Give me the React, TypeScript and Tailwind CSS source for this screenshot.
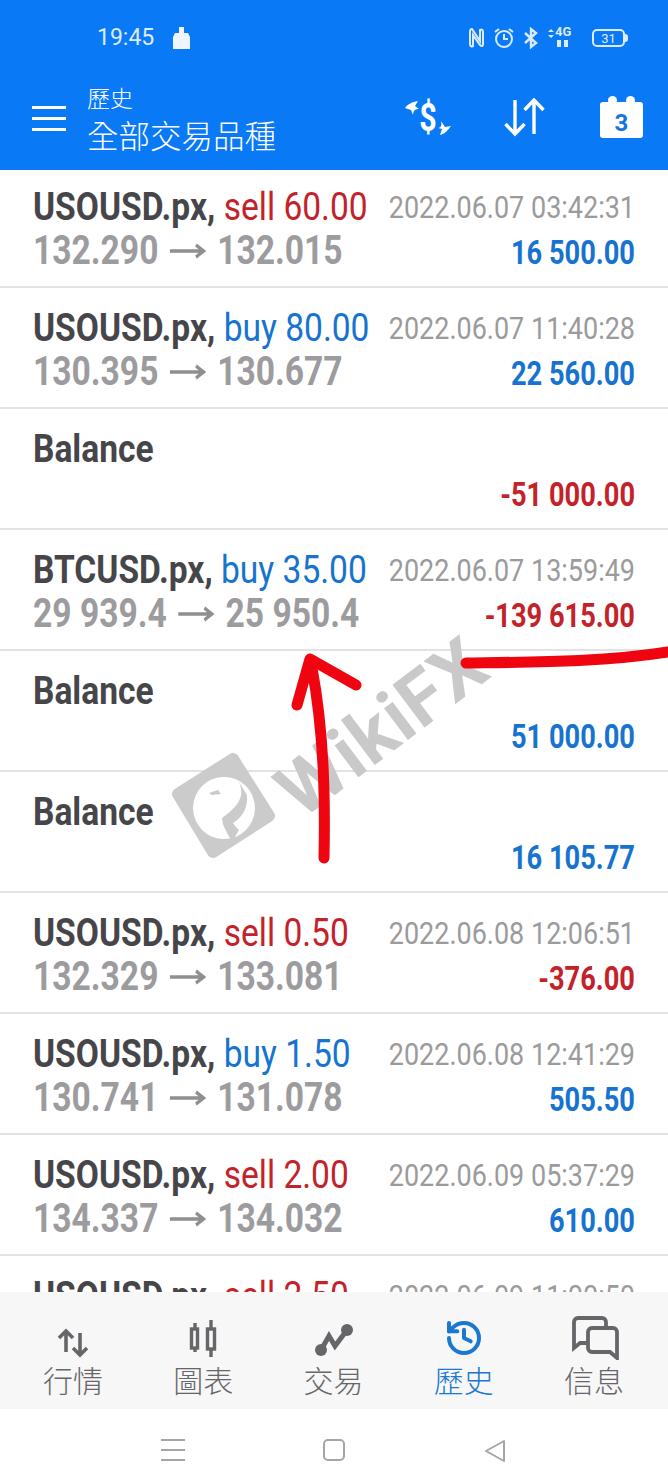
import React from "react";
import { History } from "lucide-react";

type Trade = {
  symbol: string;
  side?: "buy" | "sell";
  lots?: string;
  time?: string;
  prices?: [string, string];
  profit: string;
};

const TRADES: Trade[] = [
  { symbol: "USOUSD.px,", side: "sell", lots: "60.00", time: "2022.06.07 03:42:31", prices: ["132.290", "132.015"], profit: "16 500.00" },
  { symbol: "USOUSD.px,", side: "buy", lots: "80.00", time: "2022.06.07 11:40:28", prices: ["130.395", "130.677"], profit: "22 560.00" },
  { symbol: "Balance", profit: "-51 000.00" },
  { symbol: "BTCUSD.px,", side: "buy", lots: "35.00", time: "2022.06.07 13:59:49", prices: ["29 939.4", "25 950.4"], profit: "-139 615.00" },
  { symbol: "Balance", profit: "51 000.00" },
  { symbol: "Balance", profit: "16 105.77" },
  { symbol: "USOUSD.px,", side: "sell", lots: "0.50", time: "2022.06.08 12:06:51", prices: ["132.329", "133.081"], profit: "-376.00" },
  { symbol: "USOUSD.px,", side: "buy", lots: "1.50", time: "2022.06.08 12:41:29", prices: ["130.741", "131.078"], profit: "505.50" },
  { symbol: "USOUSD.px,", side: "sell", lots: "2.00", time: "2022.06.09 05:37:29", prices: ["134.337", "134.032"], profit: "610.00" },
  { symbol: "USOUSD.px,", side: "sell", lots: "2.50", time: "2022.06.09 11:00:50", prices: ["134.105", "133.880"], profit: "562.50" },
];

const cjk = "font-['Noto_Sans_CJK_TC','Noto_Sans',sans-serif]";

function TradeRow({ trade }: { trade: Trade }) {
  const loss = trade.profit.startsWith("-");
  return (
    <div className="h-[121px] shrink-0 border-b-2 border-[#e3e3e3] px-[33px] pt-[16px] first:h-[118px] first:pt-[13px]">
      {/* both sides are zero-width flex items so the squeezed text keeps its own anchor */}
      <div className="flex h-[48px] items-center">
        <div className="w-0 grow origin-left scale-x-[0.883] whitespace-nowrap text-[38px] leading-[48px]">
          <span className="font-bold text-[#46464a]">{trade.symbol}</span>
          {trade.side && (
            <span className={trade.side === "sell" ? "text-[#c4222a]" : "text-[#1673cf]"}>
              {" "}
              {trade.side} {trade.lots}
            </span>
          )}
        </div>
        {trade.time && (
          <div className="flex w-0 grow origin-right scale-x-[0.843] justify-end whitespace-nowrap text-[32px] leading-[48px] text-[#9b9b9b]">
            {trade.time}
          </div>
        )}
      </div>
      <div className="flex h-[40px] items-center">
        <div className="flex w-0 grow origin-left scale-x-[0.84] items-center whitespace-nowrap text-[40px] font-bold leading-[40px] text-[#9c9c9e]">
          {trade.prices && (
            <>
              {trade.prices[0]}
              <svg width="44" height="16" viewBox="0 0 44 16" className="mx-[13px] shrink-0">
                <path d="M1 8h40M32 2l9 6-9 6" fill="none" stroke="#8f8f92" strokeWidth="3.5" />
              </svg>
              {trade.prices[1]}
            </>
          )}
        </div>
        <div className={`flex w-0 grow origin-right scale-x-[0.825] justify-end whitespace-nowrap pt-[3px] text-[33px] font-bold leading-[40px] ${loss ? "text-[#c4222a]" : "text-[#1673cf]"}`}>
          {trade.profit}
        </div>
      </div>
    </div>
  );
}

function StatusBar() {
  return (
    <div className="flex h-[75px] items-center justify-between pl-[97px] pr-[40px] pt-[1px] text-[#dcebff]">
      <div className="flex items-center gap-[18px]">
        <span className="text-[23px] font-['Roboto',sans-serif]">19:45</span>
        <svg width="19" height="22" viewBox="0 0 19 22" fill="#eef5ff">
          <path d="M7 0h5v6h4l2 4v12H1V10l2-4h4z" />
        </svg>
      </div>
      <div className="flex items-center gap-[8px]">
        <svg width="17" height="22" viewBox="0 0 17 22" fill="none" stroke="currentColor" strokeWidth="2">
          <path d="M4 2c-2 0-2 1-2 3v12c0 2 1 3 3 2V8l7 10c2 2 3 1 3-1V5c0-2-1-3-3-2v11z" />
        </svg>
        <svg width="22" height="22" viewBox="0 0 22 22" fill="none" stroke="currentColor" strokeWidth="2">
          <circle cx="11" cy="12" r="8" />
          <path d="M11 7v5h4M2 5l4-3M20 5l-4-3" />
        </svg>
        <svg width="16" height="22" viewBox="0 0 16 22" fill="none" stroke="currentColor" strokeWidth="2.4">
          <path d="M2 6l11 10-5 4V2l5 4L2 16" />
        </svg>
        <div className="relative h-[24px] w-[24px]">
          <span className="absolute left-[8px] top-[-1px] text-[13px] font-bold leading-[14px] font-['Roboto',sans-serif]">4G</span>
          <svg width="24" height="24" viewBox="0 0 24 24" fill="currentColor">
            <path d="M1 6l3-3 3 3zM1 9l3 3 3-3zM10 21h4v-7h-4zM17 21h4v-7h-4z" />
          </svg>
        </div>
        <div className="ml-[13px] flex items-center">
          <div className="flex h-[18px] w-[33px] items-center justify-center rounded-[5px] border-2 border-[#dcebff] text-[13px] leading-none font-['Roboto',sans-serif]">31</div>
          <div className="h-[8px] w-[3px] rounded-r-sm bg-[#dcebff]" />
        </div>
      </div>
    </div>
  );
}

function Toolbar() {
  return (
    <div className="flex h-[95px] items-start pl-[32px] pr-[25px] text-white">
      <div className="mt-[31px] flex w-[34px] flex-col gap-[8px]">
        <div className="h-[3px] bg-white" />
        <div className="h-[3px] bg-white" />
        <div className="h-[3px] bg-white" />
      </div>
      <div className={`ml-[21px] ${cjk}`}>
        <div className="h-[35px] text-[23px] font-light leading-[44px]">歷史</div>
        <div className="mt-[3px] text-[31.5px] font-light leading-[42px]">全部交易品種</div>
      </div>
      <div className="ml-auto mt-[21px] flex items-start">
        <div className="relative mt-[2px] flex h-[40px] w-[46px] justify-center">
          <span className="scale-x-[0.8] text-[38px] font-bold leading-[40px] font-['Roboto',sans-serif]">$</span>
          <svg width="46" height="40" viewBox="0 0 46 40" fill="#ffffff" className="absolute inset-0">
            <path d="M0 10c3-4 7-6 13-7l-3 5 4 3c-4 0-6 2-6 6l-2-5zM46 28c-3 4-6 8-11 9l2-6-4-1c3 0 4-3 3-7l4 6z" />
          </svg>
        </div>
        <svg width="44" height="40" viewBox="0 0 44 40" className="ml-[52px] mt-[2px]" fill="none" stroke="#ffffff" strokeWidth="3.4">
          <path d="M12 2v34M2.5 26l9.5 10 9.5-10M31 36V2M21.5 12L31 2l9.5 10" />
        </svg>
        <div className="relative ml-[53px] mt-[6px] flex h-[36px] w-[43px] items-end justify-center rounded-[3px] bg-white text-[24px] font-bold leading-[30px] text-[#1673e6] font-['Roboto',sans-serif]">
          <div className="absolute left-[8px] top-[-6px] h-[9px] w-[9px] rounded-full bg-white" />
          <div className="absolute right-[8px] top-[-6px] h-[9px] w-[9px] rounded-full bg-white" />
          3
        </div>
      </div>
    </div>
  );
}

function TabItem({ label, active, children }: { label: string; active?: boolean; children: React.ReactNode }) {
  return (
    <div className={`flex w-[130px] flex-col items-center ${active ? "text-[#1b78d0]" : "text-[#66666a]"}`}>
      <div className="flex h-[42px] items-end">{children}</div>
      <div className={`mt-[3px] text-[30px] font-light leading-[36px] ${cjk}`}>{label}</div>
    </div>
  );
}

function TabBar() {
  return (
    <div className="relative z-10 flex h-[117px] shrink-0 justify-between bg-[#f7f7f7] pl-[8px] pr-[9px] pt-[24px]">
      <TabItem label="行情">
        <svg width="32" height="30" viewBox="0 0 32 30" fill="none" stroke="currentColor" strokeWidth="3.6">
          <path d="M9 24V3M2 10l7-7 7 7M23 5v22M16 20l7 7 7-7" />
        </svg>
      </TabItem>
      <TabItem label="圖表">
        <svg width="30" height="38" viewBox="0 0 30 38" fill="none" stroke="currentColor" strokeWidth="3.4">
          <path d="M7 3v6M7 28v4M23 0v9M23 29v8" />
          <rect x="3.5" y="9" width="6" height="19" />
          <rect x="19.5" y="9" width="7" height="20" />
        </svg>
      </TabItem>
      <TabItem label="交易">
        <svg width="40" height="34" viewBox="0 0 40 34" fill="currentColor" className="mb-[1px]">
          <circle cx="7" cy="27" r="6" />
          <circle cx="33" cy="7" r="6" />
          <path d="M7 27L15 13l6 10L33 7" fill="none" stroke="currentColor" strokeWidth="5" />
        </svg>
      </TabItem>
      <TabItem label="歷史" active>
        <History size={40} strokeWidth={2.4} />
      </TabItem>
      <TabItem label="信息">
        <svg width="48" height="44" viewBox="0 0 48 44" fill="none" stroke="currentColor" strokeWidth="3.8" className="mb-[-2px] ml-[4px]">
          <path d="M17 27H8l-6 5V6a4 4 0 0 1 4-4h24a4 4 0 0 1 4 4v6" />
          <path d="M20 12h21a4 4 0 0 1 4 4v26l-7-6H20a4 4 0 0 1-4-4V16a4 4 0 0 1 4-4z" />
        </svg>
      </TabItem>
    </div>
  );
}

function SystemNav() {
  return (
    <div className="z-10 flex h-[62px] shrink-0 items-start bg-white pl-[161px] pt-[30px]">
      <div className="flex w-[24px] flex-col gap-[8px]">
        <div className="h-[2px] bg-[#a5a5a5]" />
        <div className="h-[2px] bg-[#a5a5a5]" />
        <div className="h-[2px] bg-[#a5a5a5]" />
      </div>
      <div className="ml-[138px] h-[22px] w-[22px] rounded-[5px] border-2 border-[#a5a5a5]" />
      <svg width="24" height="24" viewBox="0 0 24 24" className="ml-[138px]" fill="none" stroke="#a5a5a5" strokeWidth="2">
        <path d="M21 2v20L3 12z" strokeLinejoin="round" />
      </svg>
    </div>
  );
}

// Markup drawn over the list: two hand-drawn red arrows and the grey stamp
function Overlay() {
  return (
    <div className="pointer-events-none absolute inset-0 z-[5]">
      <svg width="105" height="110" viewBox="0 0 105 110" className="absolute left-[171px] top-[752px]">
        <path d="M62 7L98 64 42 100 7 42z" fill="#cbcbcb" stroke="#cbcbcb" strokeWidth="12" strokeLinejoin="round" />
        <circle cx="53" cy="56" r="31" fill="#ffffff" />
        <path d="M68 30c6 14 0 24-17 36 0 8 5 14 10 24l7-12c-3-3-5-5-6-7 10-6 15-16 14-28z" fill="#cbcbcb" />
        <path d="M38 41l9-3 3 4-9 1z" fill="#cbcbcb" />
      </svg>
      <div className="absolute left-[262px] top-[690px] origin-center rotate-[-37deg] text-[75px] font-bold leading-none tracking-[1px] text-[#c9c9c9] font-['Roboto',sans-serif]">
        WikiFX
      </div>
      <svg width="668" height="300" viewBox="0 0 668 300" className="absolute left-0 top-[630px]" fill="none" stroke="#ee0510" strokeLinecap="round" strokeLinejoin="round">
        <path d="M466 33c70-1 140-1 202-11" strokeWidth="11" />
        <path d="M324 228c1-50 1-120-12-190" strokeWidth="11" />
        <path d="M297 75l13-46 46 26" strokeWidth="11" />
      </svg>
    </div>
  );
}

export default function App() {
  return (
    <div className="relative flex h-[1471px] w-[668px] flex-col overflow-hidden bg-white font-['Roboto',sans-serif]">
      <div className="h-[170px] shrink-0 bg-[#0a79f6]">
        <StatusBar />
        <Toolbar />
      </div>
      <div className="flex h-[1122px] shrink-0 flex-col overflow-hidden">
        {TRADES.map((trade, i) => (
          <TradeRow key={i} trade={trade} />
        ))}
      </div>
      <TabBar />
      <SystemNav />
      <Overlay />
    </div>
  );
}
